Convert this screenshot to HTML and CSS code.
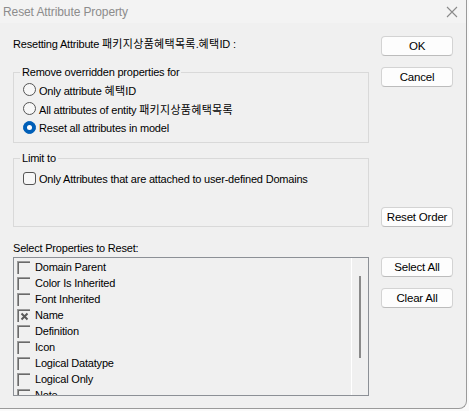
FILE: index.html
```html
<!DOCTYPE html>
<html>
<head>
<meta charset="utf-8">
<link rel="stylesheet" href="styles.css">
</head>
<body>
<div class="window">
  <div class="titlebar">
    <span class="title">Reset Attribute Property</span>
    <svg class="close" width="12" height="12" viewBox="0 0 12 12"><path d="M1 1L11 11M11 1L1 11" stroke="#8a8a8a" stroke-width="1.1" fill="none"/></svg>
  </div>
  <div class="body">
    <div class="top-left">
      <div class="resetting">Resetting Attribute <span class="ko">패키지상품혜택목록</span>.<span class="ko">혜택</span>ID :</div>
      <fieldset class="group g1">
        <legend>Remove overridden properties for</legend>
        <label class="opt"><span class="rb"></span><span class="txt">Only attribute <span class="ko">혜택</span>ID</span></label>
        <label class="opt"><span class="rb"></span><span class="txt">All attributes of entity <span class="ko">패키지상품혜택목록</span></span></label>
        <label class="opt"><span class="rb on"></span><span class="txt">Reset all attributes in model</span></label>
      </fieldset>
      <fieldset class="group g2">
        <legend>Limit to</legend>
        <label class="opt"><span class="cb"></span><span class="txt">Only Attributes that are attached to user-defined Domains</span></label>
      </fieldset>
    </div>
    <div class="top-right">
      <button class="btn">OK</button>
      <button class="btn">Cancel</button>
      <button class="btn push">Reset Order</button>
    </div>
    <div class="bottom-left">
      <div class="list-label">Select Properties to Reset:</div>
      <div class="list">
        <div class="rows">
          <div class="row"><span class="lc"></span>Domain Parent</div>
          <div class="row"><span class="lc"></span>Color Is Inherited</div>
          <div class="row"><span class="lc"></span>Font Inherited</div>
          <div class="row"><span class="lc"><svg width="9" height="9" viewBox="0 0 9 9"><path d="M1.5 1.5L7.5 7.5M7.5 1.5L1.5 7.5" stroke="#5a5a5a" stroke-width="2" fill="none"/></svg></span>Name</div>
          <div class="row"><span class="lc"></span>Definition</div>
          <div class="row"><span class="lc"></span>Icon</div>
          <div class="row"><span class="lc"></span>Logical Datatype</div>
          <div class="row"><span class="lc"></span>Logical Only</div>
          <div class="row"><span class="lc"></span>Note</div>
        </div>
        <div class="scroll"><div class="thumb"></div></div>
      </div>
    </div>
    <div class="bottom-right">
      <button class="btn">Select All</button>
      <button class="btn">Clear All</button>
    </div>
  </div>
</div>
</body>
</html>
```
FILE: styles.css
```css
html, body {
  margin: 0;
  padding: 0;
  background: #fafafa;
}
body {
  font-family: "Liberation Sans", "Noto Sans CJK KR", sans-serif;
  font-size: 11px;
  color: #000;
}
.window {
  width: 466px;
  height: 408px;
  background: #f0f0f0;
  border-right: 1px solid #9a9a9a;
  border-bottom: 1px solid #9a9a9a;
  border-bottom-right-radius: 8px;
  overflow: hidden;
}
.titlebar {
  height: 23px;
  background: #f3f3f3;
  display: flex;
  align-items: center;
  justify-content: space-between;
  padding: 0 8px 0 3px;
}
.title {
  font-size: 12px;
  color: #8c8c8c;
  letter-spacing: -0.1px;
}
.close { display: block; }
.ko {
  font-family: "Noto Sans CJK KR", sans-serif;
  font-size: 11px;
  letter-spacing: 0.3px;
}
.body {
  display: grid;
  grid-template-columns: 356px 72px;
  column-gap: 12px;
  padding-left: 13px;
}
.top-left, .bottom-left {
  letter-spacing: -0.2px;
}
.resetting {
  margin-top: 13px;
  line-height: 14px;
  white-space: nowrap;
}
.group {
  margin: 0;
  border: 1px solid #d9d9d9;
  padding: 0 0 0 9px;
  min-width: 0;
}
.group legend {
  padding: 0 2px;
  margin-left: -3px;
  line-height: 14px;
}
.g1 {
  margin-top: 14px;
  padding-top: 1px;
  padding-bottom: 5px;
}
.g2 {
  margin-top: 8px;
  padding-top: 4px;
  padding-bottom: 38px;
}
.opt {
  display: flex;
  align-items: center;
  height: 19px;
  white-space: nowrap;
}
.txt { white-space: pre; }
.rb {
  width: 11px;
  height: 11px;
  border: 1px solid #555;
  border-radius: 50%;
  background: #f7f7f7;
  margin-right: 3px;
  flex: none;
  box-sizing: content-box;
}
.rb.on {
  border-color: #005fb8;
  background: #005fb8;
  position: relative;
}
.rb.on::after {
  content: "";
  position: absolute;
  left: 3px;
  top: 3px;
  width: 5px;
  height: 5px;
  border-radius: 50%;
  background: #fff;
}
.cb {
  width: 11px;
  height: 11px;
  border: 1px solid #555;
  border-radius: 3px;
  background: #f7f7f7;
  margin-right: 3px;
  flex: none;
}
.top-right, .bottom-right {
  display: flex;
  flex-direction: column;
  gap: 11px;
}
.top-right { padding-top: 13px; }
.bottom-right { padding-top: 30px; }
.btn {
  height: 20px;
  width: 72px;
  padding: 0;
  background: #fdfdfd;
  border: 1px solid #d3d3d3;
  border-bottom-color: #bcbcbc;
  border-radius: 4px;
  font-family: "Liberation Sans", sans-serif;
  font-size: 11.5px;
  letter-spacing: -0.2px;
  color: #000;
}
.btn.push { margin-top: auto; }
.list-label {
  margin-top: 14px;
  line-height: 14px;
}
.list {
  margin-top: 2px;
  height: 137px;
  border: 1px solid #8c9096;
  display: flex;
  overflow: hidden;
}
.rows {
  flex: 1;
  padding: 1px 0 0 3px;
}
.row {
  height: 16px;
  display: flex;
  align-items: center;
  white-space: nowrap;
}
.lc {
  width: 12px;
  height: 12px;
  border-top: 1px solid #9a9a9a;
  border-left: 1px solid #9a9a9a;
  box-shadow: inset 1px 1px 0 #6a6a6a;
  background: #f0f0f0;
  margin-right: 5px;
  flex: none;
  display: flex;
  align-items: center;
  justify-content: center;
}
.lc svg { display: block; margin: 1px 0 0 1px; }
.scroll {
  width: 16px;
  border-left: 1px solid #ffffff;
  display: flex;
  justify-content: center;
  padding-top: 18px;
}
.thumb {
  width: 2px;
  height: 82px;
  background: #8a8a8a;
}
```
